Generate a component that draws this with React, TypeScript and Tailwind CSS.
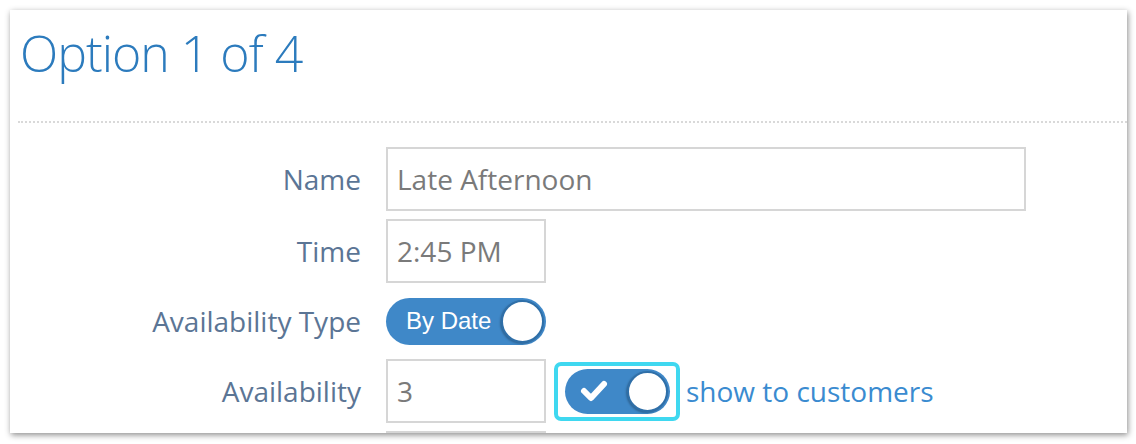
import React from "react";

const sans = "font-['Open_Sans','Noto_Sans',sans-serif]";

function TextInput({ value, wide }: { value: string; wide?: boolean }) {
  return (
    <div
      className={`flex h-[64px] items-center border-2 border-[#d6d6d6] bg-white pl-[9px] text-[28px] text-[#7a7a7a] ${
        wide ? "w-[640px]" : "w-[160px]"
      }`}
    >
      {value}
    </div>
  );
}

function Knob({ size }: { size: string }) {
  return (
    <span
      className={`${size} rounded-full border-2 border-[#2f6fa8] bg-white shadow-[-1px_1px_2px_rgba(0,0,0,0.25)]`}
    />
  );
}

function Row({ label, children }: { label: string; children: React.ReactNode }) {
  return (
    <>
      <div className="flex items-center justify-end text-[28px] text-[#5b7595]">{label}</div>
      <div className="flex items-center">{children}</div>
    </>
  );
}

export default function App() {
  return (
    <div className={`h-[444px] w-[1136px] bg-white p-[10px] ${sans}`}>
      <div className="h-[423px] w-[1117px] overflow-hidden bg-white pl-[8px] shadow-[1px_2px_6px_rgba(0,0,0,0.45)]">
        <h1 className="pl-[2px] pt-[18px] text-[50px] font-light leading-none tracking-[-1px] text-[#2c7bbd]">
          Option 1 of 4
        </h1>
        <div className="mt-[43px] border-t-2 border-dotted border-[#d9d9d9]" />

        <div className="mt-[24px] grid grid-cols-[343px_1fr] gap-x-[25px] gap-y-[8px]">
          <Row label="Name">
            <TextInput value="Late Afternoon" wide />
          </Row>
          <Row label="Time">
            <TextInput value="2:45 PM" />
          </Row>
          <Row label="Availability Type">
            <div className="flex h-[60px] items-center">
              <div className="flex h-[47px] w-[160px] items-center justify-between rounded-full bg-[#3f88c8] pl-[20px] pr-[2px]">
                <span className="font-['Liberation_Sans',Arial,sans-serif] text-[24px] text-white">
                  By Date
                </span>
                <Knob size="h-[43px] w-[43px]" />
              </div>
            </div>
          </Row>
          <Row label="Availability">
            <TextInput value="3" />
            <div className="ml-[8px] flex h-[59px] w-[126px] items-center justify-center rounded-[7px] border-4 border-[#3fd8f0]">
              <div className="flex h-[45px] w-[105px] items-center justify-between rounded-full bg-[#3f88c8] pl-[14px] pr-[2px]">
                <svg width="30" height="24" viewBox="0 0 30 24">
                  <polyline
                    points="5,12 12,19 25,5"
                    fill="none"
                    stroke="white"
                    strokeWidth="6"
                    strokeLinecap="round"
                    strokeLinejoin="round"
                  />
                </svg>
                <Knob size="h-[41px] w-[41px]" />
              </div>
            </div>
            <span className="ml-[6px] text-[28px] text-[#3a8bd0]">show to customers</span>
          </Row>
          <Row label="">
            <TextInput value="" />
          </Row>
        </div>
      </div>
    </div>
  );
}
